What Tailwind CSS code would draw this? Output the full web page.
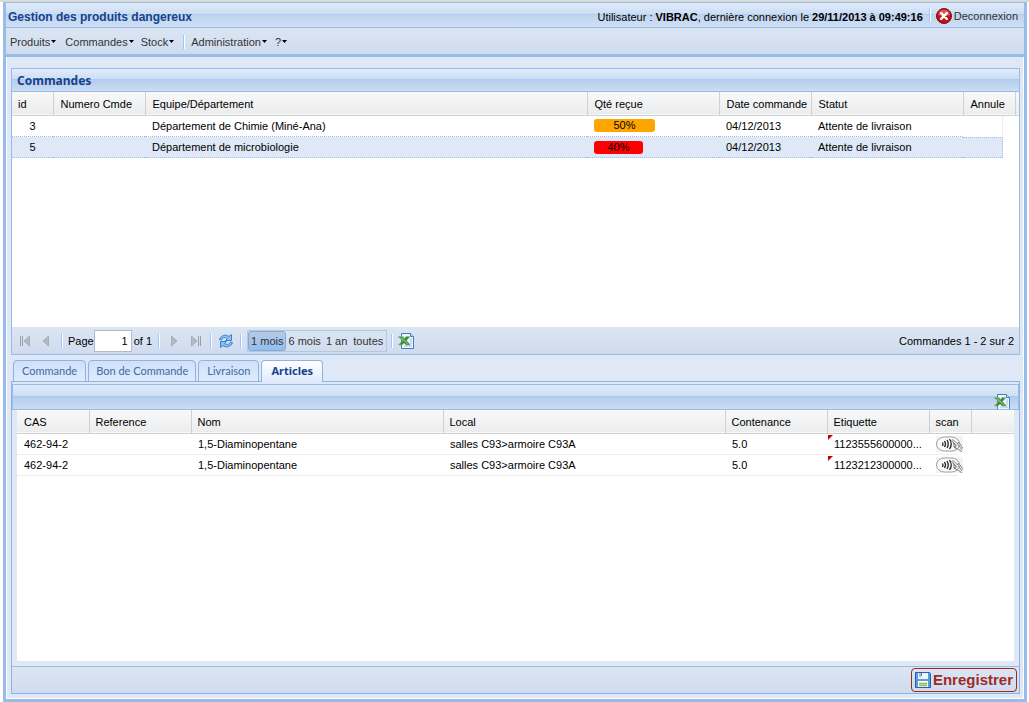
<!DOCTYPE html>
<html lang="fr">
<head>
<meta charset="utf-8">
<title>Gestion des produits dangereux</title>
<script src="https://cdn.jsdelivr.net/npm/@tailwindcss/browser@4"></script>
</head>
<body class="h-screen overflow-hidden bg-white font-['Liberation_Sans',Arial,sans-serif] text-[11px] leading-4 text-black">
<svg class="hidden" aria-hidden="true">
  <symbol id="excel" viewBox="0 0 16 16">
    <path d="M3.500 .5h9l3 3v12h-12z" fill="#eef5fd" stroke="#3f7cc0"/>
    <path d="M12.500 .5v3h3" fill="#cfe2f7" stroke="#3f7cc0"/>
    <path d="M12 6h2M12 8h2M12 10h2M6 13h8" stroke="#9dc0e6"/>
    <path d="M0 3.500h5L6.500 5.500 8 3.500h4L8.500 7.500l4 4.500H8L6 10l-2 2H.5L4.500 7.500z" fill="#3d8b37" stroke="#8fbf88" stroke-width=".6"/>
    <path d="M2 4.500h2.500l6 6.500H9z" fill="#7db877"/>
  </symbol>
  <symbol id="scan" viewBox="0 0 27 16">
    <path d="M0 0h27v16H0z" fill="#f3f3f3"/>
    <rect x=".5" y="1" width="23" height="14" rx="8" fill="#fafafa" stroke="#a0a0a0"/>
    <path d="M6.500 6.500q1 1.500 0 3.500M8.500 5q2 3 0 6M11 4q2.500 4 0 8M13.500 3q3.500 5 0 10" fill="none" stroke="#222" stroke-width="1.300"/>
    <path d="M17 3.500l4 4 2-1 4 6M17 3.500l-1 1 4 5-3-1.500M17 10l3 1-2 .5 4 1.500 4 3M21 7l5 7M17 6.500l4 4" fill="#e0e0e0" stroke="#777" stroke-width=".9"/>
  </symbol>
  <symbol id="caret" viewBox="0 0 5 3"><path d="M0 0h5L2.500 3z" fill="#000"/></symbol>
</svg>
<div class="flex h-full flex-col border-t-2 border-[#d9dcd6]">
<div class="mr-[2px] ml-[3px] flex min-h-0 flex-1 flex-col border-x-3 border-b-3 border-[#99bbe8] bg-[#dfe8f6]">

  <header class="-mx-px flex h-[26px] shrink-0 items-center border border-[#99bbe8] bg-[linear-gradient(#e0ebf9,#ccdef4_44%,#a9c8f0_46%,#c0d4ef_50%,#cfdff4)] pr-[6px] pl-[2px]">
    <h1 class="flex-1 pt-1 text-[12px] font-bold text-[#15428b]">Gestion des produits dangereux</h1>
    <p class="pt-1">Utilisateur : <b>VIBRAC</b>, dernière connexion le <b>29/11/2013 à 09:49:16</b></p>
    <span class="ml-[6px] h-[14px] w-[2px] border-l border-[#98c8ff] bg-white"></span>
    <button class="ml-[5px] flex items-center gap-[2px] pt-[2px] text-[#333]">
      <svg class="size-4" viewBox="0 0 16 16"><circle cx="8" cy="8" r="7.500" fill="#c01114" stroke="#7d0a0a"/><path d="M2 7a6 5.500 0 0 1 12 0q-6 2-12 0z" fill="#dc5254"/><path d="M5.200 5.200l5.600 5.600M10.800 5.200l-5.600 5.600" stroke="#fff" stroke-width="2.600" stroke-linecap="round"/></svg>
      Deconnexion</button>
  </header>

  <nav class="flex h-[29px] shrink-0 items-center border-b-3 border-[#99bbe8] bg-linear-to-b from-[#dbe6f4] to-[#cfdcee] pt-px pl-[4px] text-[#333]">
    <button class="flex items-center gap-px">Produits<svg class="h-[3px] w-[5px]"><use href="#caret"/></svg></button>
    <button class="ml-[9px] flex items-center gap-px">Commandes<svg class="h-[3px] w-[5px]"><use href="#caret"/></svg></button>
    <button class="ml-[7px] flex items-center gap-px">Stock<svg class="h-[3px] w-[5px]"><use href="#caret"/></svg></button>
    <span class="ml-[9px] h-[14px] w-[2px] border-l border-[#98c8ff] bg-white"></span>
    <button class="ml-[6px] flex items-center gap-px">Administration<svg class="h-[3px] w-[5px]"><use href="#caret"/></svg></button>
    <button class="ml-[8px] flex items-center gap-px">?<svg class="h-[3px] w-[5px]"><use href="#caret"/></svg></button>
  </nav>

  <main class="flex min-h-0 flex-1 flex-col border-x border-b border-white pt-[11px] pr-[3px] pb-[4px] pl-1">
    <section class="flex h-[287px] shrink-0 flex-col border border-[#99bbe8] bg-white">
      <h2 class="flex h-[23px] shrink-0 items-center border-b border-[#99bbe8] bg-[linear-gradient(#e0ebf9,#cddff4_46%,#a9c8f0_48%,#b6cdee_52%,#cbdcf3)] pt-[2px] pl-[5px] font-['Noto_Sans',sans-serif] text-[12px] font-bold text-[#15428b]">Commandes</h2>
      <div class="flex-1 bg-white">
        <table class="w-full table-fixed border-collapse text-left">
          <colgroup><col class="w-[41px]"><col class="w-[92px]"><col><col class="w-[132px]"><col class="w-[92px]"><col class="w-[152px]"><col class="w-[52px]"><col class="w-[4px]"></colgroup>
          <thead>
            <tr class="h-[23px] border-b border-[#d0d0d0] bg-linear-to-b from-[#f9f9f9] to-[#ebecee] whitespace-nowrap">
              <th class="border-r border-[#d0d0d0] pt-[2px] pl-[6px] font-normal">id</th><th class="border-r border-[#d0d0d0] pt-[2px] pl-[7px] font-normal">Numero Cmde</th><th class="border-r border-[#d0d0d0] pt-[2px] pl-[7px] font-normal">Equipe/Département</th><th class="border-r border-[#d0d0d0] pt-[2px] pl-[7px] font-normal">Qté reçue</th><th class="border-r border-[#d0d0d0] pt-[2px] pl-[7px] font-normal">Date commande</th><th class="border-r border-[#d0d0d0] pt-[2px] pl-[7px] font-normal">Statut</th><th class="border-r border-[#d0d0d0] pt-[2px] pl-[7px] font-normal">Annule</th><th></th>
            </tr>
          </thead>
          <tbody>
            <tr class="h-[21px]">
              <td class="text-center">3</td><td></td><td class="pl-[7px]">Département de Chimie (Miné-Ana)</td>
              <td class="pl-[7px]"><div class="h-[13px] w-[61px] rounded-[3px] bg-[#ffa500] text-center leading-[13px]">50%</div></td>
              <td class="pl-[7px]">04/12/2013</td><td class="pl-[7px]">Attente de livraison</td><td><div class="h-[21px] w-[40px] border-r border-[#ededed]"></div></td><td></td>
            </tr>
            <tr class="h-[21px]">
              <td class="border-y border-dotted border-[#a3bae9] bg-[#dfe8f6] text-center">5</td><td class="border-y border-dotted border-[#a3bae9] bg-[#dfe8f6]"></td><td class="border-y border-dotted border-[#a3bae9] bg-[#dfe8f6] pl-[7px]">Département de microbiologie</td>
              <td class="border-y border-dotted border-[#a3bae9] bg-[#dfe8f6] pl-[7px]"><div class="h-[13px] w-[49px] rounded-[3px] bg-[#ff0000] text-center leading-[13px]">40%</div></td>
              <td class="border-y border-dotted border-[#a3bae9] bg-[#dfe8f6] pl-[7px]">04/12/2013</td><td class="border-y border-dotted border-[#a3bae9] bg-[#dfe8f6] pl-[7px]">Attente de livraison</td><td><div class="h-[21px] w-[40px] border border-l-0 border-dotted border-[#a3bae9] bg-[#dfe8f6]"></div></td><td></td>
            </tr>
          </tbody>
        </table>
      </div>
      <footer class="flex h-[27px] shrink-0 items-center bg-linear-to-b from-[#dbe6f4] to-[#cfdcee] pr-[5px] pl-[7px]">
        <button aria-label="Première page"><svg class="h-3 w-3" viewBox="0 0 12 12"><path d="M1.500 1v10M3.500 1v10" stroke="#9a9fa6"/><path d="M10.500 1v10L5 6z" fill="#b5bac1" stroke="#9a9fa6" stroke-width=".7"/></svg></button>
        <button class="ml-[9px]" aria-label="Page précédente"><svg class="h-3 w-3" viewBox="0 0 12 12"><path d="M8.500 1v10L3 6z" fill="#b5bac1" stroke="#9a9fa6" stroke-width=".7"/></svg></button>
        <span class="ml-[9px] h-[14px] w-[2px] border-l border-[#98c8ff] bg-white"></span>
        <label for="page" class="ml-[5px]">Page</label>
        <input id="page" value="1" class="h-[22px] w-[38px] border border-[#b5b8c8] bg-white pr-[3px] text-right">
        <span class="ml-[2px]">of 1</span>
        <span class="ml-[6px] h-[14px] w-[2px] border-l border-[#98c8ff] bg-white"></span>
        <button class="ml-[8px]" aria-label="Page suivante"><svg class="h-3 w-3" viewBox="0 0 12 12"><path d="M3.500 1v10L9 6z" fill="#b5bac1" stroke="#9a9fa6" stroke-width=".7"/></svg></button>
        <button class="ml-[10px]" aria-label="Dernière page"><svg class="h-3 w-3" viewBox="0 0 12 12"><path d="M8.500 1v10M10.500 1v10" stroke="#9a9fa6"/><path d="M1.500 1v10L7 6z" fill="#b5bac1" stroke="#9a9fa6" stroke-width=".7"/></svg></button>
        <span class="ml-[8px] h-[14px] w-[2px] border-l border-[#98c8ff] bg-white"></span>
        <button class="ml-[6px]" aria-label="Actualiser"><svg class="size-4" viewBox="0 0 16 16"><path d="M1.500 6.500C3 2 8 1 11 3.500L13.500 1.500V7.500H7.500L9.500 5.500C7 3.800 4 4.500 3.500 7z" fill="#8cc0f2" stroke="#2f78c8" stroke-width=".9"/><path d="M14.500 9.500C13 14 8 15 5 12.500L2.500 14.500V8.500H8.500L6.500 10.500C9 12.200 12 11.500 12.500 9z" fill="#8cc0f2" stroke="#2f78c8" stroke-width=".9"/></svg></button>
        <span class="ml-[6px] h-[14px] w-[2px] border-l border-[#98c8ff] bg-white"></span>
        <div class="ml-[5px] flex h-[22px] items-center border border-[#b8c8d9] text-[#333]">
          <button class="h-[20px] rounded-[3px] border border-[#8ba8cf] bg-linear-to-b from-[#b5cbe6] via-[#a5c4e8] via-50% to-[#8dc0f5] px-[2px]">1 mois</button>
          <button class="px-[2px]">6 mois</button><button class="px-[3px]">1 an</button><button class="px-[3px]">toutes</button>
        </div>
        <span class="ml-[4px] h-[14px] w-[2px] border-l border-[#98c8ff] bg-white"></span>
        <button class="ml-[5px]" aria-label="Exporter vers Excel"><svg class="size-4"><use href="#excel"/></svg></button>
        <span class="ml-auto">Commandes 1 - 2 sur 2</span>
      </footer>
    </section>

    <div role="tablist" class="relative z-10 -mb-px flex h-[27px] shrink-0 items-end gap-[2px] pl-[2px] font-['Lato',sans-serif] text-[#416aa3]">
      <button role="tab" class="h-[22px] rounded-t-[4px] border border-[#8db2e3] bg-linear-to-b from-[#cfe0f7] to-[#deecfd] px-[8px]">Commande</button>
      <button role="tab" class="h-[22px] rounded-t-[4px] border border-[#8db2e3] bg-linear-to-b from-[#cfe0f7] to-[#deecfd] px-[7px]">Bon de Commande</button>
      <button role="tab" class="h-[22px] rounded-t-[4px] border border-[#8db2e3] bg-linear-to-b from-[#cfe0f7] to-[#deecfd] px-[8px]">Livraison</button>
      <button role="tab" aria-selected="true" class="h-[22px] rounded-t-[4px] border border-b-0 border-[#8db2e3] bg-linear-to-b from-white to-[#deecfd] px-[9px] pb-[2px] font-['Noto_Sans',sans-serif] font-bold text-[#15428b]">Articles</button>
    </div>

    <section class="flex min-h-0 flex-1 flex-col border border-[#8db2e3] pt-[2px]">
      <div class="flex h-[26px] shrink-0 items-end justify-end overflow-hidden border border-[#99bbe8] bg-[linear-gradient(#e0ebf9,#cddff4_46%,#a9c8f0_48%,#b6cdee_52%,#cbdcf3)] pr-[8px]">
        <button class="h-[15px] overflow-hidden" aria-label="Exporter vers Excel"><svg class="size-4"><use href="#excel"/></svg></button>
      </div>
      <div class="mx-[5px] mb-[5px] flex-1 bg-white">
        <table class="w-full table-fixed border-collapse text-left">
          <colgroup><col class="w-[72px]"><col class="w-[102px]"><col class="w-[252px]"><col><col class="w-[102px]"><col class="w-[102px]"><col class="w-[42px]"><col class="w-[43px]"></colgroup>
          <thead>
            <tr class="h-[23px] border-b border-[#d0d0d0] bg-linear-to-b from-[#f9f9f9] to-[#ebecee]">
              <th class="border-r border-[#d0d0d0] pt-[2px] pl-[7px] font-normal">CAS</th><th class="border-r border-[#d0d0d0] pt-[2px] pl-[6px] font-normal">Reference</th><th class="border-r border-[#d0d0d0] pt-[2px] pl-[6px] font-normal">Nom</th><th class="border-r border-[#d0d0d0] pt-[2px] pl-[6px] font-normal">Local</th><th class="border-r border-[#d0d0d0] pt-[2px] pl-[6px] font-normal">Contenance</th><th class="border-r border-[#d0d0d0] pt-[2px] pl-[6px] font-normal">Etiquette</th><th class="border-r border-[#d0d0d0] pt-[2px] pl-[6px] font-normal">scan</th><th></th>
            </tr>
          </thead>
          <tbody>
            <tr class="h-[21px]">
              <td class="border-b border-[#ededed] pl-[7px]">462-94-2</td><td class="border-b border-[#ededed]"></td><td class="border-b border-[#ededed] pl-[7px]">1,5-Diaminopentane</td><td class="border-b border-[#ededed] pl-[7px]">salles C93&gt;armoire C93A</td><td class="border-b border-[#ededed] pl-[7px]">5.0</td>
              <td class="relative border-b border-[#ededed] pl-[7px]"><svg class="absolute top-px left-px size-[5px]" viewBox="0 0 5 5"><path d="M0 0h5L0 5z" fill="#c00"/></svg>1123555600000...</td>
              <td><div class="flex h-[21px] w-[29px] items-center border-b border-[#ededed] pl-[7px]"><button class="shrink-0" aria-label="Scanner"><svg class="h-4 w-[27px]"><use href="#scan"/></svg></button></div></td><td></td>
            </tr>
            <tr class="h-[21px]">
              <td class="border-b border-[#ededed] pl-[7px]">462-94-2</td><td class="border-b border-[#ededed]"></td><td class="border-b border-[#ededed] pl-[7px]">1,5-Diaminopentane</td><td class="border-b border-[#ededed] pl-[7px]">salles C93&gt;armoire C93A</td><td class="border-b border-[#ededed] pl-[7px]">5.0</td>
              <td class="relative border-b border-[#ededed] pl-[7px]"><svg class="absolute top-px left-px size-[5px]" viewBox="0 0 5 5"><path d="M0 0h5L0 5z" fill="#c00"/></svg>1123212300000...</td>
              <td><div class="flex h-[21px] w-[29px] items-center border-b border-[#ededed] pl-[7px]"><button class="shrink-0" aria-label="Scanner"><svg class="h-4 w-[27px]"><use href="#scan"/></svg></button></div></td><td></td>
            </tr>
          </tbody>
        </table>
      </div>
      <footer class="flex h-[27px] shrink-0 items-center justify-end border-t border-[#a3bad9] bg-linear-to-b from-[#dbe6f4] to-[#cfdcee] pr-[2px]">
        <button class="flex h-6 items-center gap-[2px] rounded-[4px] border border-[#a02a22] px-[3px] text-[15px] font-bold text-[#a02a22]">
          <svg class="size-4" viewBox="0 0 16 16"><path d="M.5 .5h14l1 1v14H.5z" fill="#5b9be0" stroke="#2d5f9e"/><path d="M3 1h10v6H3z" fill="#eef5fc"/><path d="M5 1v4M6.500 1v3" stroke="#5b86b8"/><path d="M3 9h10v6H3z" fill="#fff"/><path d="M4 11.500h8M4 13.500h8" stroke="#7cc04b" stroke-width="1.400"/></svg>
          Enregistrer</button>
      </footer>
    </section>
  </main>
</div>
</div>
</body>
</html>
